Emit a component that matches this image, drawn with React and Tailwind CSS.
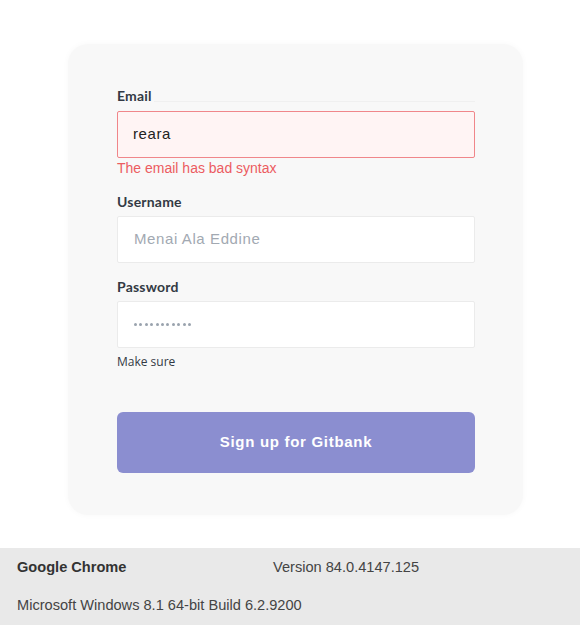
import React from "react";

export default function App() {
  return (
    <div className="w-[580px] h-[625px] bg-white flex flex-col overflow-hidden">
      <div className="pt-[44px] pl-[68px]">
        <div className="w-[455px] h-[471px] rounded-[20px] bg-[#f8f8f8] shadow-[0_0_6px_rgba(0,0,0,0.03)] pt-[39px] pr-[48px] pl-[49px] flex flex-col">
          <div className="flex items-end h-[24px]">
            <span className="text-[14px] font-bold text-[#333a44] leading-[22px] font-['Lato',sans-serif] tracking-[0.2px]">Email</span>
            <div className="flex-1 h-px bg-[#f0f0f0] mb-[5px] ml-[2px]"></div>
          </div>
          <div className="mt-[4px] h-[47px] border border-[#f0868a] bg-[#fff4f4] rounded-[2px] flex items-center pl-[15px] text-[15px] text-[#222] font-['Liberation_Sans',Arial,sans-serif] tracking-[0.6px]">
            reara
          </div>
          <div className="h-[20px] leading-[20px] text-[14px] text-[#ec5c61] font-['Liberation_Sans',Arial,sans-serif]">
            The email has bad syntax
          </div>
          <div className="mt-[13px] h-[22px] leading-[22px] text-[14px] font-bold text-[#333a44] font-['Lato',sans-serif] tracking-[0.2px]">
            Username
          </div>
          <div className="mt-[3px] h-[47px] border border-[#ebebeb] bg-white rounded-[2px] flex items-center pl-[16px] text-[15px] text-[#a2a9b2] font-['Liberation_Sans',Arial,sans-serif] tracking-[0.6px]">
            Menai Ala Eddine
          </div>
          <div className="mt-[13px] h-[22px] leading-[22px] text-[14px] font-bold text-[#333a44] font-['Lato',sans-serif] tracking-[0.2px]">
            Password
          </div>
          <div className="mt-[3px] h-[47px] border border-[#ebebeb] bg-white rounded-[2px] flex items-center pl-[16px] gap-[2.4px]">
            {Array.from({ length: 11 }).map((_, i) => (
              <span key={i} className="w-[3px] h-[3px] rounded-full bg-[#9aa3ae]"></span>
            ))}
          </div>
          <div className="mt-[4px] h-[20px] leading-[20px] text-[12px] text-[#333a44] font-['Open_Sans',sans-serif]">
            Make sure
          </div>
          <div className="mt-[40px] h-[61px] rounded-[6px] bg-[#8b8ed0] flex items-center justify-center text-white text-[15px] font-bold tracking-[0.7px] font-['Liberation_Sans',Arial,sans-serif]">
            Sign up for Gitbank
          </div>
        </div>
      </div>
      <div className="mt-[33px] h-[77px] bg-[#e9e9e9] font-['Liberation_Sans',Arial,sans-serif] text-[14.6px] text-[#333] pl-[17px] pt-[1px]">
        <div className="flex h-[38px] items-center">
          <span className="w-[256px] font-bold">Google Chrome</span>
          <span className="text-[#444]">Version 84.0.4147.125</span>
        </div>
        <div className="flex h-[38px] items-center text-[#444]">
          Microsoft Windows 8.1 64-bit Build 6.2.9200
        </div>
      </div>
    </div>
  );
}
